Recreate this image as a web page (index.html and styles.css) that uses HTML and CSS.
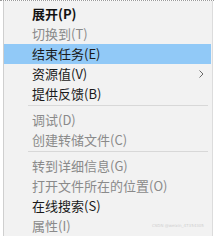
FILE: index.html
```html
<!DOCTYPE html>
<html lang="zh">
<head>
<meta charset="utf-8">
<link rel="stylesheet" href="styles.css">
</head>
<body>
<div class="page">
  <div class="strip"></div>
  <div class="menu">
    <div class="item bold">展开(P)</div>
    <div class="item off">切换到(T)</div>
    <div class="item sel">结束任务(E)</div>
    <div class="item sub">资源值(V)<svg class="arrow" width="5" height="8" viewBox="0 0 5 8"><path d="M0.5 0.5 L4 4 L0.5 7.5" fill="none" stroke="#6a6a6a" stroke-width="1"/></svg></div>
    <div class="item">提供反馈(B)</div>
    <div class="sep"></div>
    <div class="item off">调试(D)</div>
    <div class="item off">创建转储文件(C)</div>
    <div class="sep"></div>
    <div class="item off">转到详细信息(G)</div>
    <div class="item off">打开文件所在的位置(O)</div>
    <div class="item">在线搜索(S)</div>
    <div class="item off">属性(I)<span class="mark">CSDN @weixin_47354305</span></div>
  </div>
</div>
</body>
</html>
```
FILE: styles.css
```css
html, body {
  margin: 0;
  padding: 0;
  background: #ffffff;
}
.page {
  width: 214px;
  height: 236px;
  overflow: hidden;
  display: flex;
  border-top: 1px dotted #9a9a9a;
  box-sizing: border-box;
}
.strip {
  width: 3px;
  flex: none;
  background: #ffffff;
}
.menu {
  flex: none;
  width: 210px;
  background: #f2f2f2;
  border-left: 1px solid #cfcfcf;
  border-right: 1px solid #dcdcdc;
  box-sizing: border-box;
  padding-top: 3px;
  display: flex;
  flex-direction: column;
  font-family: "Noto Sans CJK SC", "Noto Sans", sans-serif;
  font-size: 13px;
  color: #1a1a1a;
}
.item {
  height: 20px;
  line-height: 20px;
  padding-left: 28px;
  position: relative;
  white-space: nowrap;
}
.bold { font-weight: bold; color: #111111; }
.off { color: #8a8a8a; }
.sel { background: #91c9f7; margin-right: 1px; }
.arrow {
  position: absolute;
  left: 195px;
  top: 6px;
}
.sep {
  height: 6px;
  box-sizing: border-box;
  margin-left: 24px;
  margin-right: 4px;
  border-top: 1px solid transparent;
}
.sep::before {
  content: "";
  display: block;
  height: 1px;
  background: #d8d8d8;
}
.mark {
  position: absolute;
  left: 148px;
  top: 0;
  font-family: "DejaVu Sans", sans-serif;
  font-size: 4px;
  color: #d0d0d0;
}
```
